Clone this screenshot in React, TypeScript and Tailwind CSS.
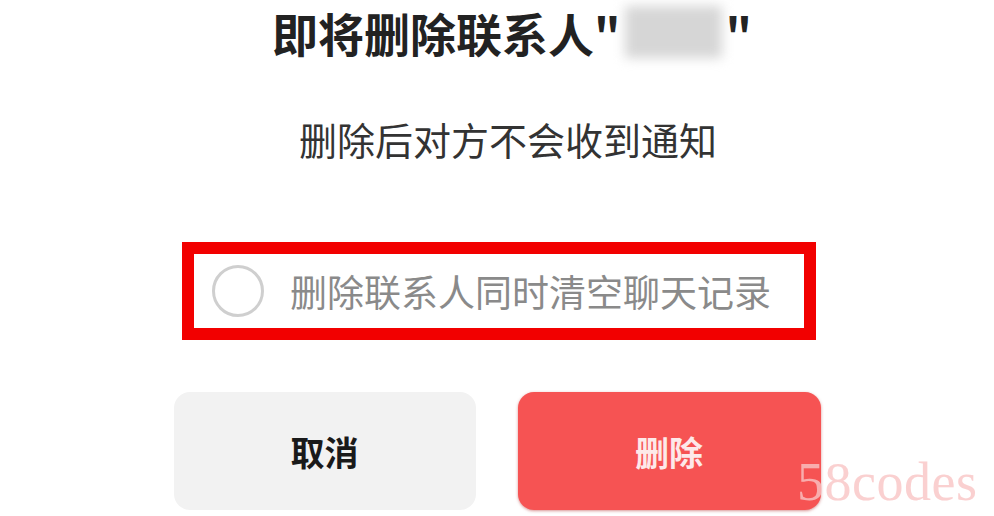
import React from "react";

const cjk = "font-['Noto_Sans_CJK_SC','Noto_Sans',sans-serif]";

export default function App() {
  return (
    <div className={`relative w-[994px] h-[516px] overflow-hidden bg-white ${cjk}`}>
      <div className="flex flex-col items-center">
        <div className="mt-[6px] ml-[30px] flex items-center text-[46px] leading-none font-bold text-[#222]">
          <span>即将删除联系人"</span>
          <span className="mx-[4px] h-[52px] w-[97px] bg-[#d6d6d6] blur-[6px]" />
          <span>"</span>
        </div>
        <div className="mt-[62px] ml-[22px] text-[38px] leading-none text-[#333]">删除后对方不会收到通知</div>
        <div className="mt-[84px] ml-[4px] flex h-[98px] w-[634px] items-center border-[12px] border-[#f20000] pl-[18px]">
          <span className="h-[52px] w-[52px] rounded-full border-[3px] border-[#cfcfcf]" />
          <span className="ml-[26px] text-[37px] leading-none text-[#8a8a8a]">删除联系人同时清空聊天记录</span>
        </div>
        <div className="mt-[52px] flex gap-[42px]">
          <button className="flex h-[118px] w-[302px] items-center justify-center rounded-[16px] bg-[#f2f2f2] text-[34px] font-bold text-[#1a1a1a]">
            取消
          </button>
          <button className="flex h-[118px] w-[303px] items-center justify-center rounded-[16px] bg-[#f65353] text-[34px] font-bold text-[#fde9e9] shadow-[0_1px_3px_rgba(180,40,40,0.5)]">
            删除
          </button>
        </div>
      </div>
      <div className="absolute left-[797px] top-[455px] font-['Liberation_Serif',serif] text-[54px] leading-none tracking-[0.5px] text-[#f9c4c4]/80">
        58codes
      </div>
    </div>
  );
}
